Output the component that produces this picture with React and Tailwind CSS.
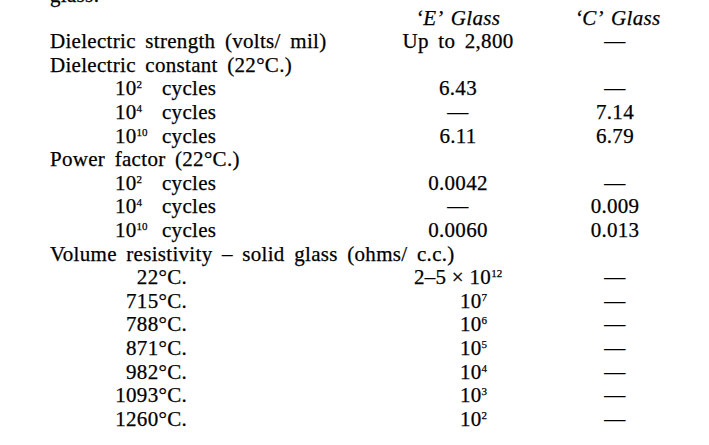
import React from "react";

function Sup({ children }) {
  return (
    <sup className="relative top-[-7px] align-baseline text-[11px] leading-none tracking-normal">{children}</sup>
  );
}

function Pow({ n }) {
  return (
    <span>
      10<Sup>{n}</Sup>
    </span>
  );
}

function Row({ label, e, c, eClass = "text-center", cClass = "text-center" }) {
  return (
    <div className="grid grid-cols-[350px_116px_59px_80px] pl-[50px] h-[23.6px]">
      <div className="whitespace-nowrap">{label}</div>
      <div className={"whitespace-nowrap " + eClass}>{e}</div>
      <div />
      <div className={"whitespace-nowrap " + cClass}>{c}</div>
    </div>
  );
}

function Cycles({ n }) {
  return (
    <div className="flex pl-[65px]">
      <span className="w-[47px]">
        <Pow n={n} />
      </span>
      <span>cycles</span>
    </div>
  );
}

function Temp({ t }) {
  return <div className="w-[137px] text-right">{t}</div>;
}

const D = "\u2014";

export default function App() {
  return (
    <div className="w-[709px] h-[445px] overflow-hidden bg-white text-black font-['Liberation_Serif',serif] text-[21px] leading-[23.6px] tracking-[0.3px] [word-spacing:4px] [-webkit-text-stroke:0.25px_black]">
      <div className="-mt-[16px] pl-[50px] h-[22.6px]">glass:</div>
      <Row
        label=""
        e={<i>{"\u2018E\u2019 Glass"}</i>}
        c={<i>{"\u2018C\u2019 Glass"}</i>}
      />
      <Row label="Dielectric strength (volts/ mil)" e="Up to 2,800" c={D} />
      <Row label="Dielectric constant (22°C.)" e="" c="" />
      <Row label={<Cycles n="2" />} e="6.43" c={D} />
      <Row label={<Cycles n="4" />} e={D} c="7.14" />
      <Row label={<Cycles n="10" />} e="6.11" c="6.79" />
      <Row label="Power factor (22°C.)" e="" c="" />
      <Row label={<Cycles n="2" />} e="0.0042" c={D} />
      <Row label={<Cycles n="4" />} e={D} c="0.009" />
      <Row label={<Cycles n="10" />} e="0.0060" c="0.013" />
      <Row label="Volume resistivity – solid glass (ohms/ c.c.)" e="" c="" />
      <Row
        label={<Temp t="22°C." />}
        e={
          <span className="[word-spacing:0px]">
            2–5 × 10<Sup>12</Sup>
          </span>
        }
        c={D}
      />
      <Row label={<Temp t="715°C." />} e={<Pow n="7" />} eClass="pl-[60px]" c={D} />
      <Row label={<Temp t="788°C." />} e={<Pow n="6" />} eClass="pl-[60px]" c={D} />
      <Row label={<Temp t="871°C." />} e={<Pow n="5" />} eClass="pl-[60px]" c={D} />
      <Row label={<Temp t="982°C." />} e={<Pow n="4" />} eClass="pl-[60px]" c={D} />
      <Row label={<Temp t="1093°C." />} e={<Pow n="3" />} eClass="pl-[60px]" c={D} />
      <Row label={<Temp t="1260°C." />} e={<Pow n="2" />} eClass="pl-[60px]" c={D} />
    </div>
  );
}
